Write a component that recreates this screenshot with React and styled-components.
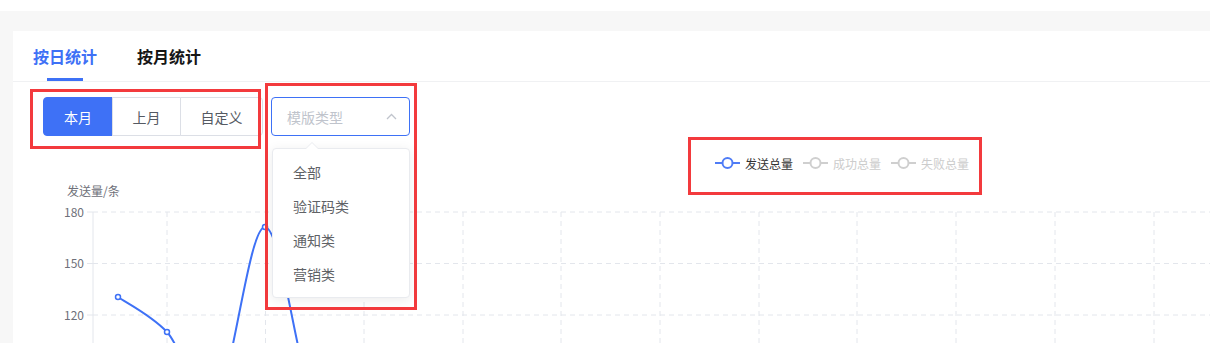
import React from "react";
import styled, { createGlobalStyle } from "styled-components";

const GlobalStyle = createGlobalStyle`
  html, body {
    margin: 0;
    padding: 0;
    overflow: hidden;
    background: #fff;
    font-family: "Noto Sans CJK SC", "Noto Sans", sans-serif;
  }
`;

const BLUE = "#3e71f6";

const Page = styled.div`
  position: relative;
  padding-top: 11px;
  background: #fff;
`;

const Canvas = styled.div`
  background: #f7f7f7;
  padding: 20px 0 0 13px;
`;

const Card = styled.div`
  background: #fff;
  height: 320px;
  overflow: hidden;
`;

const Tabs = styled.div`
  display: flex;
  gap: 40px;
  height: 50px;
  padding-left: 20px;
  border-bottom: 1px solid #f0f1f3;
`;

const Tab = styled.div`
  position: relative;
  display: flex;
  align-items: center;
  font-size: 16px;
  font-weight: 700;
  color: ${(p) => (p.$active ? BLUE : "#161616")};
  &::after {
    content: "";
    display: ${(p) => (p.$active ? "block" : "none")};
    position: absolute;
    left: 14px;
    right: 14px;
    bottom: 0;
    height: 3px;
    background: ${BLUE};
  }
`;

const Toolbar = styled.div`
  display: flex;
  gap: 8px;
  margin: 15px 0 0 30px;
`;

const ButtonGroup = styled.div`
  display: flex;
`;

const SegButton = styled.button`
  width: ${(p) => p.$w}px;
  height: 39px;
  padding: 0;
  margin-left: -1px;
  font-family: inherit;
  font-size: 14px;
  color: ${(p) => (p.$active ? "#fff" : "#555a63")};
  background: ${(p) => (p.$active ? BLUE : "#fff")};
  border: 1px solid ${(p) => (p.$active ? BLUE : "#dcdfe6")};
  border-radius: 0;
  cursor: pointer;
  &:first-child {
    margin-left: 0;
    border-radius: 4px 0 0 4px;
  }
  &:last-child {
    border-radius: 0 4px 4px 0;
  }
`;

const SelectWrap = styled.div`
  position: relative;
  width: 139px;
`;

const SelectBox = styled.div`
  box-sizing: border-box;
  height: 39px;
  display: flex;
  align-items: center;
  justify-content: space-between;
  padding: 0 12px 0 15px;
  border: 1px solid ${BLUE};
  border-radius: 4px;
  font-size: 14px;
  color: #c0c4cc;
`;

const Dropdown = styled.ul`
  position: absolute;
  top: 51px;
  left: 1px;
  right: 0;
  margin: 0;
  padding: 6px 0;
  list-style: none;
  background: #fff;
  border: 1px solid #e9ebef;
  border-radius: 4px;
  box-shadow: 0 2px 12px rgba(0, 0, 0, 0.08);
  z-index: 5;
  &::before,
  &::after {
    content: "";
    position: absolute;
    left: 33px;
    border: 6px solid transparent;
    border-top: 0;
  }
  &::before {
    top: -7px;
    border-bottom-color: #e9ebef;
  }
  &::after {
    top: -6px;
    border-bottom-color: #fff;
  }
`;

const Option = styled.li`
  height: 34px;
  line-height: 34px;
  padding-left: 20px;
  font-size: 14px;
  color: #606266;
`;

const Legend = styled.div`
  display: flex;
  gap: 10px;
  height: 16px;
  margin-top: 19px;
  padding-left: 702px;
`;

const LegendItem = styled.div`
  display: flex;
  align-items: center;
  gap: 5px;
  font-size: 12px;
  color: ${(p) => (p.$on ? "#333" : "#ccc")};
`;

const Chart = styled.svg`
  display: block;
  width: 100%;
  height: 172px;
  font-family: "Noto Sans CJK SC", "Noto Sans", sans-serif;
`;

const Mark = styled.div`
  position: absolute;
  box-sizing: border-box;
  border: 3px solid #f33a3d;
  pointer-events: none;
`;

function Chevron() {
  return (
    <svg width="11" height="7" viewBox="0 0 11 7">
      <path d="M1 6 L5.5 1.5 L10 6" fill="none" stroke="#c0c4cc" strokeWidth="1.3" />
    </svg>
  );
}

function LegendIcon({ on }) {
  const c = on ? "#4f7cf6" : "#cfcfcf";
  return (
    <svg width="25" height="14" viewBox="0 0 25 14">
      <path d="M0 7 H25" stroke={c} strokeWidth="2" />
      <circle cx="12.5" cy="7" r="5" fill="#fff" stroke={c} strokeWidth="2" />
    </svg>
  );
}

// chart coordinates: page x - 13, page y - 171
const AXIS_X = 80;
const ticks = [
  { v: 180, y: 41 },
  { v: 150, y: 92.5 },
  { v: 120, y: 144 },
];
const vLines = [154, 252.5, 351, 450, 548, 647, 746, 844, 943, 1042, 1141];
const points = [
  [105, 126],
  [154, 161],
  [203, 229],
  [252, 56],
  [301, 232],
  [350, 236],
  [399, 240],
  [448, 240],
];

function smoothPath(pts) {
  let d = `M${pts[0][0]} ${pts[0][1]}`;
  for (let i = 0; i < pts.length - 1; i++) {
    const p0 = pts[i - 1] || pts[i];
    const p1 = pts[i];
    const p2 = pts[i + 1];
    const p3 = pts[i + 2] || p2;
    const c1 = [p1[0] + (p2[0] - p0[0]) / 6, p1[1] + (p2[1] - p0[1]) / 6];
    const c2 = [p2[0] - (p3[0] - p1[0]) / 6, p2[1] - (p3[1] - p1[1]) / 6];
    d += ` C${c1[0]} ${c1[1]} ${c2[0]} ${c2[1]} ${p2[0]} ${p2[1]}`;
  }
  return d;
}

const options = ["全部", "验证码类", "通知类", "营销类"];
const legend = [
  { name: "发送总量", on: true },
  { name: "成功总量", on: false },
  { name: "失败总量", on: false },
];

export default function App() {
  return (
    <Page>
      <GlobalStyle />
      <Canvas>
        <Card>
          <Tabs>
            <Tab $active>按日统计</Tab>
            <Tab>按月统计</Tab>
          </Tabs>
          <Toolbar>
            <ButtonGroup>
              <SegButton $active $w={70}>本月</SegButton>
              <SegButton $w={69}>上月</SegButton>
              <SegButton $w={83}>自定义</SegButton>
            </ButtonGroup>
            <SelectWrap>
              <SelectBox>
                <span>模版类型</span>
                <Chevron />
              </SelectBox>
              <Dropdown>
                {options.map((o) => (
                  <Option key={o}>{o}</Option>
                ))}
              </Dropdown>
            </SelectWrap>
          </Toolbar>
          <Legend>
            {legend.map((l) => (
              <LegendItem key={l.name} $on={l.on}>
                <LegendIcon on={l.on} />
                {l.name}
              </LegendItem>
            ))}
          </Legend>
          <Chart>
            <text x="54" y="24.5" fontSize="12" fill="#6e7079">
              发送量/条
            </text>
            {ticks.map((t) => (
              <g key={t.v}>
                <path
                  d={`M${AXIS_X} ${t.y} H1200`}
                  stroke="#e3e6ec"
                  strokeDasharray="5 4"
                />
                <path d={`M${AXIS_X - 6} ${t.y} H${AXIS_X}`} stroke="#e3e6ec" />
                <text
                  x={AXIS_X - 9}
                  y={t.y + 4.5}
                  fontSize="12"
                  fill="#6e7079"
                  textAnchor="end"
                >
                  {t.v}
                </text>
              </g>
            ))}
            {vLines.map((x) => (
              <path
                key={x}
                d={`M${x} 41 V172`}
                stroke="#e3e6ec"
                strokeDasharray="5 4"
              />
            ))}
            <path d={`M${AXIS_X} 41 V172`} stroke="#e3e6ec" />
            <path d={smoothPath(points)} fill="none" stroke={BLUE} strokeWidth="2" />
            {[points[0], points[1], points[3]].map(([x, y]) => (
              <circle
                key={x}
                cx={x}
                cy={y}
                r="2.5"
                fill="#fff"
                stroke={BLUE}
                strokeWidth="1.5"
              />
            ))}
          </Chart>
        </Card>
      </Canvas>
      <Mark style={{ left: 30, top: 89, width: 231, height: 60 }} />
      <Mark style={{ left: 265, top: 83, width: 152, height: 227 }} />
      <Mark style={{ left: 688, top: 137, width: 294, height: 58 }} />
    </Page>
  );
}
